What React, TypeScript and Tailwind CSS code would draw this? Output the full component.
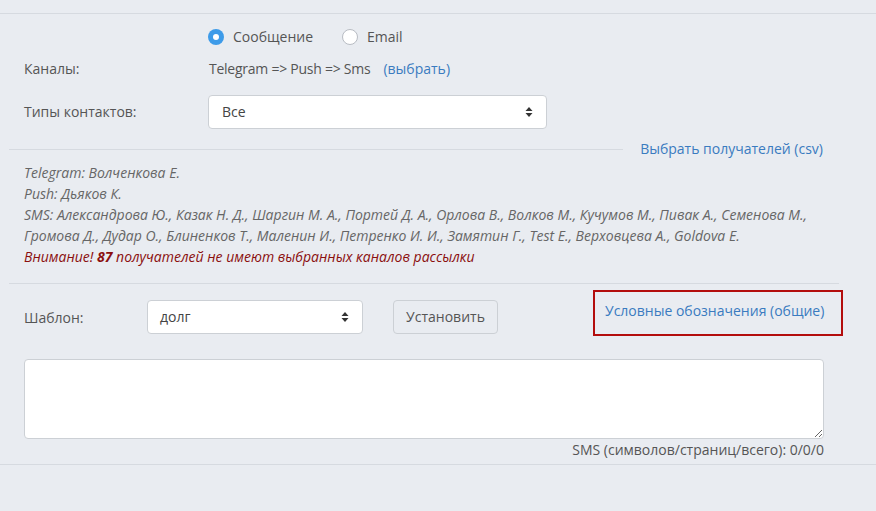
import React from "react";

function SortIcon() {
  return (
    <svg width="8" height="12" viewBox="0 0 8 12" className="shrink-0">
      <path d="M4 1 L7.5 5 L0.5 5 Z" fill="#333" />
      <path d="M4 11 L7.5 7 L0.5 7 Z" fill="#333" />
    </svg>
  );
}

function Radio({ checked, label }: { checked?: boolean; label: string }) {
  return (
    <label className="flex items-center gap-[9px]">
      {checked ? (
        <span className="flex h-[16px] w-[16px] items-center justify-center rounded-full bg-[#3d9be9]">
          <span className="h-[6px] w-[6px] rounded-full bg-white" />
        </span>
      ) : (
        <span className="h-[16px] w-[16px] rounded-full border border-[#b8bcc3] bg-white" />
      )}
      <span>{label}</span>
    </label>
  );
}

export default function App() {
  return (
    <div className="min-h-[511px] bg-[#e9ecf1] font-['Open_Sans',sans-serif] text-[14px] leading-[20px] text-[#555]">
      <div className="h-[14px] border-b border-[#d6dae0]" />
      <div className="ml-[9px] w-[830px]">
        {/* radios */}
        <div className="mt-[13px] flex h-[20px] items-center gap-[29px] pl-[199px]">
          <Radio checked label="Сообщение" />
          <Radio label="Email" />
        </div>
        {/* channels */}
        <div className="mt-[12px] flex h-[20px] items-center pl-[15px]">
          <span className="w-[185px]">Каналы:</span>
          <span className="tracking-[-0.25px]">Telegram =&gt; Push =&gt; Sms</span>
          <a className="ml-[13px] text-[#3a7bc0]">(выбрать)</a>
        </div>
        {/* contact types */}
        <div className="mt-[16px] flex h-[34px] items-center pl-[15px]">
          <span className="w-[184px]">Типы контактов:</span>
          <div className="flex h-[34px] w-[339px] items-center justify-between rounded-[4px] border border-[#ccd0d5] bg-white pl-[13px] pr-[13px] text-[#444]">
            <span>Все</span>
            <SortIcon />
          </div>
        </div>
        {/* separator with link */}
        <div className="mt-[10px] flex h-[20px] items-center">
          <div className="h-0 flex-1 border-t border-[#d6dae0]" />
          <a className="ml-[17px] mr-[16px] text-[#3a7bc0]">Выбрать получателей (csv)</a>
        </div>
        {/* recipients */}
        <div className="mt-[3px] pl-[15px] text-[14px] font-normal italic leading-[21px] text-[#666]">
          <div>Telegram: Волченкова Е.</div>
          <div>Push: Дьяков К.</div>
          <div>
            SMS: Александрова Ю., Казак Н. Д., Шаргин М. А., Портей Д. А., Орлова В., Волков М., Кучумов М., Пивак А., Семенова М.,
            <br />
            Громова Д., Дудар О., Блиненков Т., Маленин И., Петренко И. И., Замятин Г., Test E., Верховцева А., Goldova E.
          </div>
          <div className="text-[#8b0f0f]">
            Внимание! <b className="font-bold">87</b> получателей не имеют выбранных каналов рассылки
          </div>
        </div>
        <div className="mt-[16px] h-0 border-t border-[#d6dae0]" />
        {/* template row */}
        <div className="mt-[6px] flex h-[46px] items-start">
          <span className="mt-[18px] w-[138px] shrink-0 pl-[15px]">Шаблон:</span>
          <div className="mt-[10px] flex h-[34px] w-[216px] shrink-0 items-center justify-between rounded-[4px] border border-[#ccd0d5] bg-white pl-[12px] pr-[13px] text-[#444]">
            <span>долг</span>
            <SortIcon />
          </div>
          <button className="ml-[30px] mt-[10px] h-[34px] w-[105px] shrink-0 rounded-[4px] border border-[#ccd0d5] text-[#555]">
            Установить
          </button>
          <div className="ml-[95px] h-[46px] w-[250px] shrink-0 border-2 border-[#b30d0d] pl-[10px] pt-[9px]">
            <a className="text-[#3a7bc0]">Условные обозначения (общие)</a>
          </div>
        </div>
        {/* textarea */}
        <textarea className="ml-[15px] mt-[23px] block h-[80px] w-[800px] rounded-[4px] border border-[#ccd0d5] bg-white" />
        <div className="mt-[1px] w-[815px] text-right">SMS (символов/страниц/всего): 0/0/0</div>
      </div>
      <div className="mt-[4px] h-0 border-t border-[#d6dae0]" />
    </div>
  );
}
